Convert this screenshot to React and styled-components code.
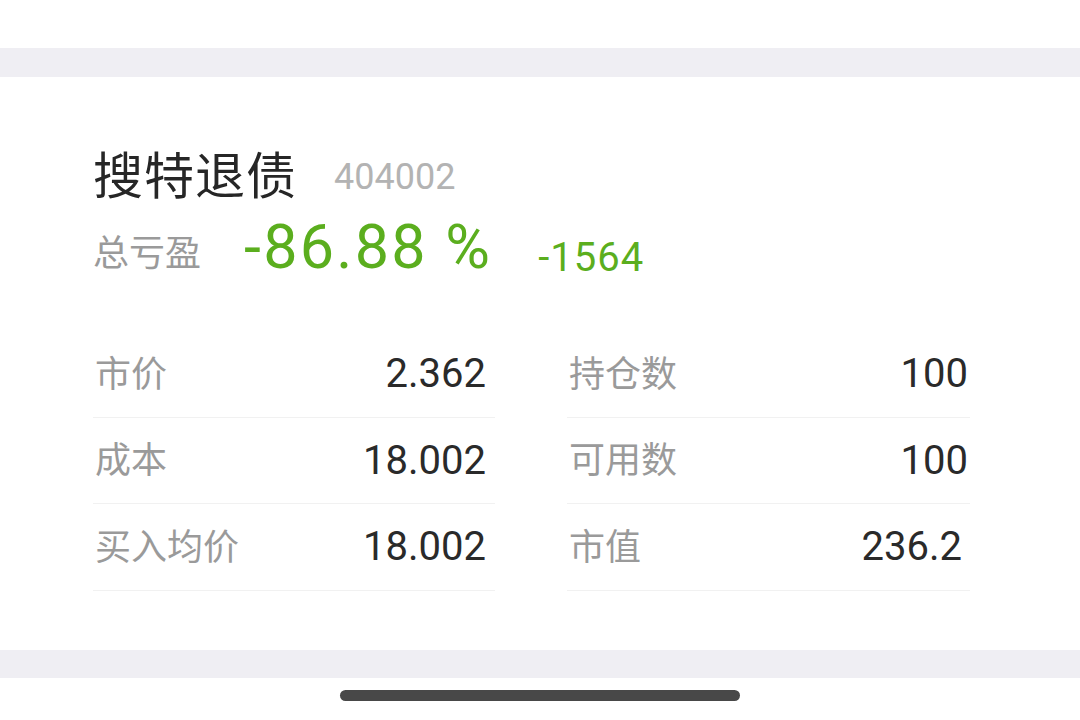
import React from "react";
import styled, { createGlobalStyle } from "styled-components";

const GlobalStyle = createGlobalStyle`
  html, body {
    margin: 0;
    padding: 0;
    background: #ffffff;
  }
  body {
    font-family: "Roboto", "Noto Sans CJK SC", sans-serif;
  }
`;

const Screen = styled.div`
  width: 1080px;
  height: 720px;
  display: flex;
  flex-direction: column;
  background: #ffffff;
  overflow: hidden;
`;

const TopSpace = styled.div`
  height: 48px;
`;

const Gap = styled.div`
  height: ${(p) => p.h}px;
  background: #efeef3;
`;

const Card = styled.section`
  height: 573px;
  box-sizing: border-box;
  padding: 65px 110px 0 93px;
  background: #ffffff;
`;

const TitleRow = styled.div`
  display: flex;
  align-items: baseline;
  gap: 37px;
  height: 60px;
`;

const Name = styled.h1`
  margin: 0;
  font-family: "Noto Sans CJK SC", sans-serif;
  font-size: 50px;
  font-weight: 400;
  line-height: 60px;
  color: #262626;
  letter-spacing: 1px;
`;

const Code = styled.span`
  font-family: "Roboto", sans-serif;
  font-size: 36px;
  line-height: 60px;
  color: #b3b3b3;
  position: relative;
  top: -5px;
`;

const ProfitRow = styled.div`
  display: flex;
  align-items: baseline;
  margin-top: 13px;
  height: 70px;
`;

const ProfitLabel = styled.span`
  font-family: "Noto Sans CJK SC", sans-serif;
  font-size: 36px;
  line-height: 70px;
  color: #9a9a9a;
  margin-right: 43px;
  position: relative;
  top: -5px;
`;

const Percent = styled.span`
  font-family: "Roboto", sans-serif;
  font-size: 61px;
  line-height: 70px;
  letter-spacing: 2.3px;
  color: #5bae1e;
  margin-right: 46px;
  position: relative;
  top: -3px;
`;

const Amount = styled.span`
  font-family: "Roboto", sans-serif;
  font-size: 40px;
  line-height: 70px;
  letter-spacing: 1px;
  color: #5bae1e;
`;

const Grid = styled.div`
  margin-top: 46px;
  display: grid;
  grid-template-columns: 402px 403px;
  column-gap: 72px;
`;

const Row = styled.div`
  height: 86.5px;
  box-sizing: border-box;
  display: flex;
  align-items: center;
  justify-content: space-between;
  padding: 0 ${(p) => p.pr}px 0 2px;
  border-bottom: 1px solid #f1f1f1;
`;

const Label = styled.span`
  font-family: "Noto Sans CJK SC", sans-serif;
  font-size: 36px;
  color: #9a9a9a;
  margin-bottom: 6px;
`;

const Value = styled.span`
  font-family: "Roboto", sans-serif;
  font-size: 40px;
  color: #2a2a2a;
`;

const Bottom = styled.div`
  flex: 1;
  display: flex;
  justify-content: center;
  padding-top: 12px;
`;

const HomeBar = styled.div`
  width: 400px;
  height: 11px;
  border-radius: 6px;
  background: #484848;
`;

const rows = [
  ["市价", "2.362", 9, "持仓数", "100", 2],
  ["成本", "18.002", 9, "可用数", "100", 2],
  ["买入均价", "18.002", 9, "市值", "236.2", 8],
];

export default function App() {
  return (
    <Screen>
      <GlobalStyle />
      <TopSpace />
      <Gap h={29} />
      <Card>
        <TitleRow>
          <Name>搜特退债</Name>
          <Code>404002</Code>
        </TitleRow>
        <ProfitRow>
          <ProfitLabel>总亏盈</ProfitLabel>
          <Percent>-86.88 %</Percent>
          <Amount>-1564</Amount>
        </ProfitRow>
        <Grid>
          {rows.map(([l1, v1, p1, l2, v2, p2]) => (
            <React.Fragment key={l1}>
              <Row pr={p1}>
                <Label>{l1}</Label>
                <Value>{v1}</Value>
              </Row>
              <Row pr={p2}>
                <Label>{l2}</Label>
                <Value>{v2}</Value>
              </Row>
            </React.Fragment>
          ))}
        </Grid>
      </Card>
      <Gap h={28} />
      <Bottom>
        <HomeBar />
      </Bottom>
    </Screen>
  );
}
